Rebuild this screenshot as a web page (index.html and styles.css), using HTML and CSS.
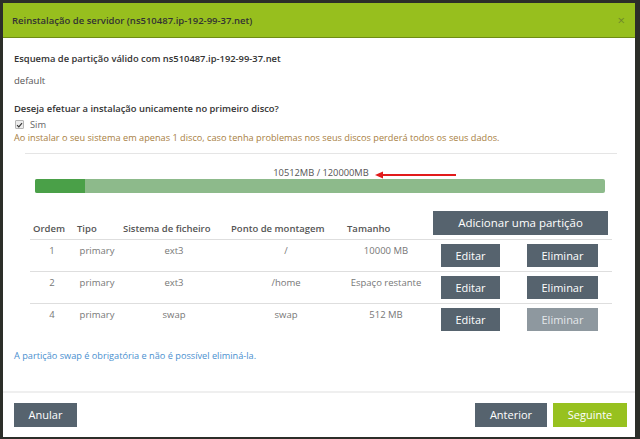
FILE: index.html
```html
<!DOCTYPE html>
<html lang="pt">
<head>
<meta charset="utf-8">
<title>Reinstalação de servidor</title>
<link rel="stylesheet" href="styles.css">
</head>
<body>
<div class="page">
  <div class="modal">
    <div class="modal-header">
      <span class="modal-title">Reinstalação de servidor (ns510487.ip-192-99-37.net)</span>
      <span class="close">×</span>
    </div>
    <div class="modal-body">
      <p class="heading first">Esquema de partição válido com ns510487.ip-192-99-37.net</p>
      <p class="plain">default</p>
      <p class="heading second">Deseja efetuar a instalação unicamente no primeiro disco?</p>
      <label class="check-row">
        <span class="checkbox"><svg viewBox="0 0 10 10" width="8" height="8"><path d="M1.5 5.2 L4 7.6 L8.6 2.2" fill="none" stroke="#333" stroke-width="1.6"/></svg></span>
        <span>Sim</span>
      </label>
      <p class="warning">Ao instalar o seu sistema em apenas 1 disco, caso tenha problemas nos seus discos perderá todos os seus dados.</p>

      <div class="partitions">
        <div class="usage">
          <div class="usage-label">10512MB / 120000MB</div>
          <svg class="arrow" width="81" height="8" viewBox="0 0 81 8"><path d="M4 4 H81" stroke="#e21b1b" stroke-width="2"/><path d="M0 4 L8 0.5 L8 7.5 Z" fill="#e21b1b"/></svg>
          <div class="bar"><div class="bar-fill" style="width:8.8%"></div></div>
        </div>
        <table class="ptable">
          <colgroup>
            <col class="c-ordem"><col class="c-tipo"><col class="c-fs"><col class="c-mount"><col class="c-size"><col class="c-edit"><col class="c-del">
          </colgroup>
          <thead>
            <tr>
              <th>Ordem</th><th>Tipo</th><th>Sistema de ficheiro</th><th>Ponto de montagem</th><th>Tamanho</th>
              <th colspan="2" class="add-cell"><button class="btn btn-dark btn-add">Adicionar uma partição</button></th>
            </tr>
          </thead>
          <tbody>
            <tr>
              <td>1</td><td>primary</td><td>ext3</td><td>/</td><td>10000 MB</td>
              <td><button class="btn btn-dark btn-edit">Editar</button></td>
              <td><button class="btn btn-dark btn-del">Eliminar</button></td>
            </tr>
            <tr>
              <td>2</td><td>primary</td><td>ext3</td><td>/home</td><td>Espaço restante</td>
              <td><button class="btn btn-dark btn-edit">Editar</button></td>
              <td><button class="btn btn-dark btn-del">Eliminar</button></td>
            </tr>
            <tr>
              <td>4</td><td>primary</td><td>swap</td><td>swap</td><td>512 MB</td>
              <td><button class="btn btn-dark btn-edit">Editar</button></td>
              <td><button class="btn btn-disabled btn-del">Eliminar</button></td>
            </tr>
          </tbody>
        </table>
      </div>
      <p class="info">A partição swap é obrigatória e não é possível eliminá-la.</p>
    </div>
    <div class="modal-footer">
      <button class="btn btn-dark btn-cancel">Anular</button>
      <div class="footer-right">
        <button class="btn btn-dark btn-prev">Anterior</button>
        <button class="btn btn-green btn-next">Seguinte</button>
      </div>
    </div>
  </div>
</div>
</body>
</html>
```

FILE: styles.css
```css
* { box-sizing: border-box; }
html, body { margin: 0; padding: 0; }
body {
  background: #2c2e29;
  font-family: "Open Sans", "DejaVu Sans", sans-serif;
  font-size: 9.3px;
  color: #555;
  width: 640px;
  height: 439px;
  overflow: hidden;
}
.page {
  padding: 3px 5px 2px 3px;
}
.modal {
  width: 632px;
  height: 434px;
  background: #fff;
  display: flex;
  flex-direction: column;
}
.modal-header {
  height: 35px;
  background: #97bf1e;
  border-bottom: 1px solid #6f8c14;
  display: flex;
  align-items: center;
  justify-content: space-between;
  padding: 0 10px 0 9px;
}
.modal-title {
  font-weight: 600;
  font-size: 9.5px;
  color: #333;
}
.close {
  font-size: 13px;
  color: #6f8a2a;
  line-height: 1;
}
.modal-body {
  flex: 1;
  padding: 0 11px;
}
p { margin: 0; }
.heading {
  font-weight: 600;
  font-size: 9.4px;
  color: #333;
  line-height: 14px;
}
.heading.first { margin-top: 14px; }
.plain { margin-top: 8px; line-height: 14px; color: #555; font-size: 9.5px; }
.heading.second { margin-top: 14px; }
.check-row {
  display: flex;
  align-items: center;
  gap: 6px;
  margin-top: 2px;
  height: 13px;
  line-height: 13px;
  color: #666;
  padding-left: 1px;
}
.checkbox {
  width: 9px;
  height: 9px;
  border: 1px solid #b5b5b5;
  border-radius: 1px;
  background: #ececec;
  display: flex;
  align-items: center;
  justify-content: center;
}
.warning {
  line-height: 13px;
  color: #a8803f;
  font-size: 9.2px;
}
.partitions {
  margin: 9px 7px 0 11px;
  border-top: 1px solid #e5e5e5;
}
.usage {
  position: relative;
  padding-top: 13px;
}
.usage-label {
  text-align: center;
  line-height: 12px;
  color: #555;
}
.arrow {
  position: absolute;
  left: 350px;
  top: 17px;
}
.bar {
  margin: 0 12px 0 10px;
  height: 14px;
  background: #8dba8b;
  border-radius: 2px;
  overflow: hidden;
}
.bar-fill {
  height: 100%;
  background: #4aa048;
}
.ptable {
  margin: 15px 5px 0 5px;
  width: 582px;
  table-layout: fixed;
  border-collapse: collapse;
}
.c-ordem { width: 44px; }
.c-tipo { width: 46px; }
.c-fs { width: 108px; }
.c-mount { width: 116px; }
.c-size { width: 84px; }
.c-edit { width: 85px; }
.c-del { width: 99px; }
.ptable th {
  height: 31px;
  text-align: left;
  font-weight: 600;
  font-size: 9.5px;
  color: #555;
  vertical-align: bottom;
  padding: 0 0 3px 3px;
  line-height: 14px;
  border-bottom: 1px solid #dedede;
  white-space: nowrap;
}
.ptable th.add-cell {
  padding: 0 4px 4px 5px;
}
.ptable td {
  text-align: center;
  vertical-align: top;
  padding: 4px 0 4px 0;
  line-height: 14px;
  font-size: 9.5px;
  color: #777;
  height: 32px;
  border-bottom: 1px solid #dedede;
  white-space: nowrap;
}
.ptable tbody tr:last-child td { border-bottom: none; }
.btn {
  font-family: "Open Sans", "DejaVu Sans", sans-serif;
  font-size: 11px;
  border: none;
  border-radius: 0;
  color: #fff;
  padding: 0;
  height: 24px;
  line-height: 24px;
  cursor: pointer;
}
.btn-dark { background: #56636e; }
.btn-disabled { background: #8e989f; color: #e4e7ea; }
.btn-green { background: #97c11f; }
.btn-add { width: 100%; height: 24px; font-size: 11.5px; }
.btn-edit { width: 59px; height: 23px; line-height: 23px; }
.btn-del { width: 71px; height: 23px; line-height: 23px; }
.info {
  margin-top: 14px;
  line-height: 14px;
  color: #4a90cf;
  font-size: 9.2px;
}
.modal-footer {
  border-top: 2px solid #efefef;
  padding: 10px 8px 10px 11px;
  display: flex;
  justify-content: space-between;
}
.footer-right { display: flex; gap: 6px; }
.btn-cancel { width: 63px; }
.btn-prev { width: 72px; }
.btn-next { width: 74px; }
```
